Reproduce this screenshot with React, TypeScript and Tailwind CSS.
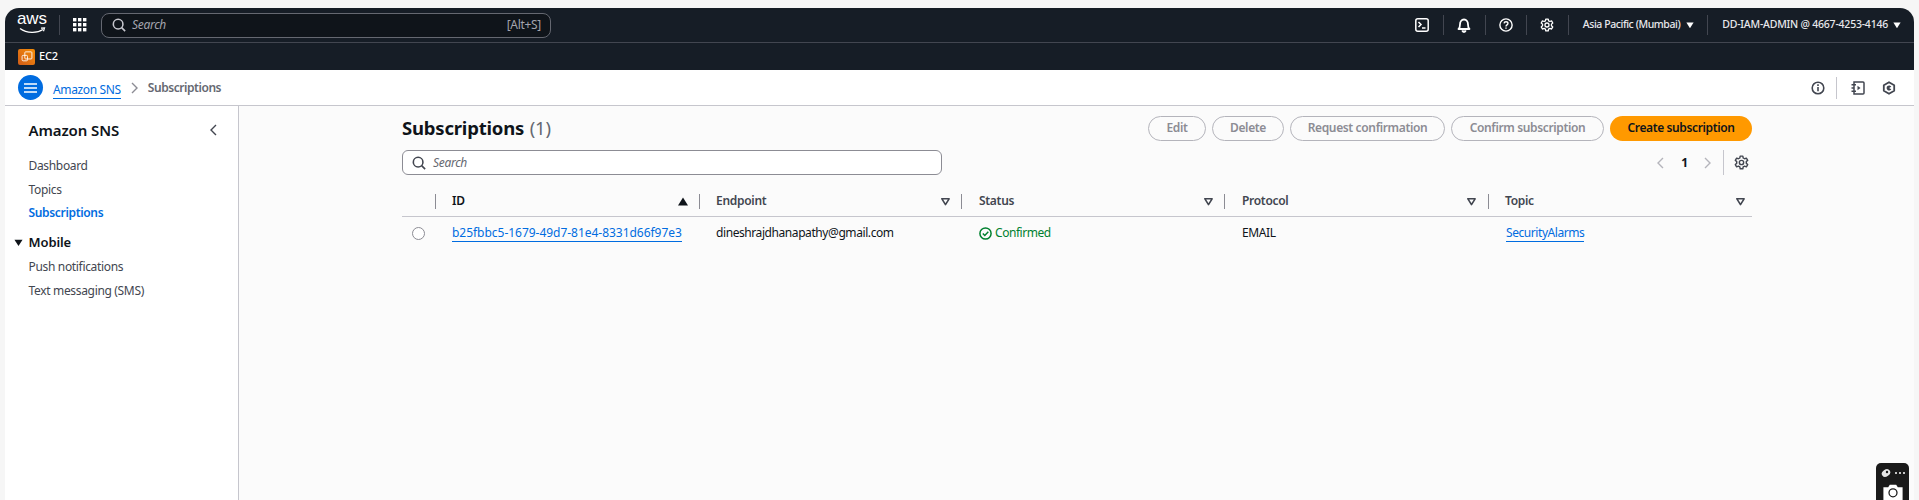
import React from "react";

const Sep = ({ c = "bg-[#424650]", h = "h-[20px]" }: { c?: string; h?: string }) => <div className={`w-px ${h} ${c} shrink-0`} />;

const SearchIcon = ({ c = "#c6c6cd" }: { c?: string }) => (
  <svg width="14" height="14" viewBox="0 0 16 16" fill="none" stroke={c} strokeWidth="1.8"><circle cx="7" cy="7" r="5.5" /><path d="M11 11l4 4" /></svg>
);

const Gear = ({ c = "#fff", s = 15 }: { c?: string; s?: number }) => (
  <svg width={s} height={s} viewBox="0 0 16 16" fill="none" stroke={c} strokeWidth="1.5" strokeLinejoin="round">
    <path d="M6.6 1.2h2.8l.4 2 1.5.8 1.9-.7 1.4 2.4-1.5 1.3v1.9l1.5 1.3-1.4 2.4-1.9-.7-1.5.8-.4 2H6.6l-.4-2-1.5-.8-1.9.7-1.4-2.4 1.5-1.3V7L1.4 5.7l1.4-2.4 1.9.7 1.5-.8z" />
    <circle cx="8" cy="8" r="2.3" />
  </svg>
);

const Caret = ({ c = "#fff", s = 8 }: { c?: string; s?: number }) => (
  <svg width={s} height={s} viewBox="0 0 10 10" fill={c}><path d="M0.5 2h9L5 9z" /></svg>
);

const SortDown = () => (
  <svg width="9" height="9" viewBox="0 0 10 10" fill="none" stroke="#424650" strokeWidth="1.8" strokeLinejoin="round"><path d="M1 2h8L5 8.5z" /></svg>
);

const Chevron = ({ dir, c, s = 12 }: { dir: "l" | "r"; c: string; s?: number }) => (
  <svg width={s} height={s} viewBox="0 0 12 12" fill="none" stroke={c} strokeWidth="1.4"><path d={dir === "l" ? "M8 1L3 6l5 5" : "M4 1l5 5-5 5"} /></svg>
);

const Head = ({ label, sort, mr = "mr-[11px]", ml = "ml-[16px]" }: { label: string; sort?: boolean; mr?: string; ml?: string }) => (
  <div className="flex items-center h-[30px]">
    <Sep c="bg-[#8c8c94]" h="h-[15px]" />
    <span className={`${ml} text-[12px] font-semibold tracking-[-0.3px] ${sort ? "text-[#0f141a]" : "text-[#424650]"}`}>{label}</span>
    <span className={`ml-auto ${mr} flex`}>
      {sort ? <svg width="10" height="9" viewBox="0 0 10 9" fill="#0f141a"><path d="M5 .5L10 8.5H0z" /></svg> : <SortDown />}
    </span>
  </div>
);

const Pill = ({ children, w }: { children: React.ReactNode; w: string }) => (
  <div className={`${w} h-[25px] rounded-full border border-[#b4b4bb] flex items-center justify-center text-[12px] font-semibold tracking-[-0.36px] text-[#8c8c94] pb-[1px]`}>{children}</div>
);

const Link = ({ children, t = "" }: { children: React.ReactNode; t?: string }) => (
  <a className={`text-[12px] leading-[16px] text-[#006ce0] border-b border-[#006ce0] ${t}`}>{children}</a>
);

export default function App() {
  return (
    <div className="relative h-[500px] w-[1919px] overflow-hidden bg-[#f6f6f6] pt-2 pl-[5px] pr-[5px]" style={{ fontFamily: '"Noto Sans", sans-serif' }}>
      <div className="h-[492px] rounded-t-[14px] overflow-hidden bg-[#fbfbfb] flex flex-col">
        {/* Top nav */}
        <div className="h-[35px] shrink-0 bg-[#161d26] border-b border-[#424650] flex items-center text-white">
          <div className="ml-[11px] w-[32px] h-[26px] flex flex-col items-center leading-none relative">
            <span className="text-[17px] leading-[16px] -mt-[1px]" style={{ fontFamily: '"Liberation Sans", sans-serif' }}>aws</span>
            <svg width="27" height="8" viewBox="0 0 27 8" fill="none" className="absolute top-[15px] left-[3px]">
              <path d="M1 1.5C8 6.5 18 6.5 24 2.5" stroke="#fff" strokeWidth="1.4" />
              <path d="M22 1.2l3.5-.2-1 3.2" stroke="#fff" strokeWidth="1.2" />
            </svg>
          </div>
          <div className="ml-[11px]"><Sep /></div>
          <svg className="ml-[13px]" width="14" height="14" viewBox="0 0 14 14" fill="#fff">
            {[0, 5, 10].flatMap((y) => [0, 5, 10].map((x) => <rect key={`${x}-${y}`} x={x} y={y} width="3.4" height="3.4" />))}
          </svg>
          <div className="ml-[14px] w-[450px] h-[25px] rounded-[8px] border border-[#656871] bg-[#0f141a] flex items-center pl-[10px] pr-[9px]">
            <SearchIcon />
            <span className="ml-[6px] text-[12px] italic tracking-[-0.3px] text-[#a4a4ad]">Search</span>
            <span className="ml-auto text-[12px] tracking-[-0.3px] text-[#a4a4ad]">[Alt+S]</span>
          </div>
          <div className="ml-auto flex items-center h-full">
            <svg width="14" height="14" viewBox="0 0 14 14" fill="none" stroke="#fff" strokeWidth="1.5"><rect x=".8" y=".8" width="12.4" height="12.4" rx="2" /><path d="M3.5 4l2.5 2.5L3.5 9M7 10h3.5" /></svg>
            <div className="ml-[14px]"><Sep /></div>
            <svg className="ml-[13px]" width="14" height="15" viewBox="0 0 14 15" fill="none" stroke="#fff" strokeWidth="1.8" strokeLinejoin="round"><path d="M1.500 11c1.300-1 1.500-2 1.500-4.500S4.500 1.500 7 1.500 11 4 11 6.500s.2 3.500 1.500 4.500z" /><path d="M5.200 12.500c.3 1 1 1.500 1.800 1.500s1.500-.5 1.800-1.500" fill="#fff" /></svg>
            <div className="ml-[14px]"><Sep /></div>
            <svg className="ml-[13px]" width="14" height="14" viewBox="0 0 16 16" fill="none" stroke="#fff" strokeWidth="1.6"><circle cx="8" cy="8" r="7" /><path d="M5.8 6.200C5.900 5 6.800 4.300 8 4.300s2.200.8 2.200 1.900c0 1.700-2.200 1.700-2.200 3.500M8 10.800v1.400" /></svg>
            <div className="ml-[13px]"><Sep /></div>
            <div className="ml-[13px] flex"><Gear s={14} /></div>
            <div className="ml-[14px]"><Sep /></div>
            <span className="ml-[14px] text-[10.500px] font-medium tracking-[-0.43px] text-[#e8e8ec]">Asia Pacific (Mumbai)</span>
            <span className="ml-[6px] flex"><Caret /></span>
            <div className="ml-[13px]"><Sep /></div>
            <span className="ml-[14px] text-[10.500px] font-medium tracking-[-0.22px] text-[#e8e8ec]">DD-IAM-ADMIN @ 4667-4253-4146</span>
            <span className="ml-[5px] mr-[13px] flex"><Caret /></span>
          </div>
        </div>
        {/* Services bar */}
        <div className="h-[27px] shrink-0 bg-[#161d26] flex items-center">
          <div className="ml-[13px] w-[17px] h-[16px] rounded-[2px] bg-gradient-to-tr from-[#d05c17] to-[#f78e04] flex items-center justify-center">
            <svg width="12" height="12" viewBox="0 0 11 11" fill="none" stroke="#fff" strokeWidth=".8"><rect x="3.500" y=".8" width="6.500" height="6.500" rx=".8" /><rect x="1" y="4" width="5" height="5" rx="1" /></svg>
          </div>
          <span className="ml-[4px] text-[11px] font-medium tracking-[-0.2px] text-white">EC2</span>
        </div>
        {/* Breadcrumb */}
        <div className="h-[36px] shrink-0 bg-white border-b border-[#c6c6cd] flex items-center">
          <div className="ml-[13px] w-[25px] h-[25px] rounded-full bg-[#006ce0] flex items-center justify-center">
            <svg width="13" height="12" viewBox="0 0 13 12" stroke="#fff" strokeWidth="1.600"><path d="M0 2h13M0 6h13M0 10h13" /></svg>
          </div>
          <div className="ml-[10px]"><Link t="tracking-[-0.35px]">Amazon SNS</Link></div>
          <span className="ml-[7px] flex"><Chevron dir="r" c="#8c8c94" /></span>
          <span className="ml-[8px] text-[12px] font-semibold tracking-[-0.45px] text-[#656871]">Subscriptions</span>
          <div className="ml-auto flex items-center">
            <svg width="14" height="14" viewBox="0 0 14 14" fill="none" stroke="#424650" strokeWidth="1.600"><circle cx="7" cy="7" r="5.800" /><path d="M7 6v4.200M7 3.300v1.600" /></svg>
            <div className="ml-[11px]"><Sep c="bg-[#c6c6cd]" h="h-[22px]" /></div>
            <svg className="ml-[14px]" width="14" height="14" viewBox="0 0 14 14" fill="none" stroke="#424650" strokeWidth="1.500"><path d="M3 1h9a1 1 0 0 1 1 1v10a1 1 0 0 1-1 1H3z" /><path d="M0.500 3.800h4.500M0.500 7h2.500M0.500 10.200h4.500" /><path d="M6.500 4.800L9.500 7l-3 2.200z" fill="#424650" stroke="none" /></svg>
            <svg className="ml-[17px] mr-[18px]" width="14" height="14" viewBox="0 0 14 14" fill="none" stroke="#424650" strokeWidth="1.800" strokeLinejoin="round"><path d="M7 1.200l5.200 3v5.600L7 12.800l-5.200-3V4.200z" /><path d="M9.300 5.800A2.500 2.500 0 1 0 9.300 8.200L7 7z" fill="#424650" stroke="none" /></svg>
          </div>
        </div>
        {/* Body */}
        <div className="flex flex-1 min-h-0">
          <aside className="w-[234px] shrink-0 bg-white border-r border-[#c6c6cd] pl-[23.500px] text-[12px] tracking-[-0.33px] text-[#424650]">
            <div className="relative h-[15px] mt-[17px] flex items-center text-[15px] font-semibold tracking-[-0.1px] text-[#0f141a]">
              Amazon SNS
              <span className="absolute left-[179px] top-[1px] flex"><Chevron dir="l" c="#424650" /></span>
            </div>
            <div className="mt-[16.500px] flex flex-col">
              <div className="h-[23.500px] flex items-center">Dashboard</div>
              <div className="h-[23.500px] flex items-center">Topics</div>
              <div className="h-[23.500px] flex items-center font-semibold text-[#006ce0]">Subscriptions</div>
            </div>
            <div className="relative h-[24px] mt-[5.500px] flex items-center text-[13px] font-semibold tracking-[-0.1px] text-[#0f141a]">
              <span className="absolute -left-[15px] top-[7px] flex"><Caret c="#0f141a" s={9} /></span>
              Mobile
            </div>
            <div className="flex flex-col">
              <div className="h-[24px] flex items-center">Push notifications</div>
              <div className="h-[24px] flex items-center">Text messaging (SMS)</div>
            </div>
          </aside>
          <main className="ml-[163px] w-[1350px] shrink-0">
            <div className="h-[25px] mt-[10px] flex items-center">
              <h1 className="-mt-[2px] text-[18.500px] font-bold tracking-[-0.2px] text-[#0f141a]">Subscriptions <span className="font-normal text-[#656871] ml-[1px]">(1)</span></h1>
              <div className="ml-auto flex gap-[6px]">
                <Pill w="w-[58px]">Edit</Pill>
                <Pill w="w-[72px]">Delete</Pill>
                <Pill w="w-[155px]">Request confirmation</Pill>
                <Pill w="w-[153px]">Confirm subscription</Pill>
                <div className="w-[142px] h-[25px] rounded-full bg-[#ff9900] flex items-center justify-center text-[12px] font-semibold tracking-[-0.38px] text-[#0f141a] pb-[1px]">Create subscription</div>
              </div>
            </div>
            <div className="h-[25px] mt-[9px] flex items-center">
              <div className="w-[540px] h-[25px] rounded-[6px] border border-[#8c8c94] bg-white flex items-center pl-[9px]">
                <SearchIcon c="#424650" />
                <span className="ml-[7px] text-[12px] italic tracking-[-0.3px] text-[#656871]">Search</span>
              </div>
              <div className="ml-auto flex items-center">
                <Chevron dir="l" c="#b4b4bb" />
                <span className="ml-[14px] text-[12px] font-bold text-[#0f141a]">1</span>
                <span className="ml-[13px] flex"><Chevron dir="r" c="#b4b4bb" /></span>
                <div className="ml-[10px]"><Sep c="bg-[#c6c6cd]" h="h-[25px]" /></div>
                <div className="ml-[10px] mr-[3px] flex"><Gear c="#424650" s={15} /></div>
              </div>
            </div>
            <div className="mt-[11px] grid grid-cols-[33px_264px_262px_263px_264px_264px] border-b border-[#c6c6cd]">
              <div />
              <Head label="ID" sort />
              <Head label="Endpoint" />
              <Head label="Status" ml="ml-[17px]" />
              <Head label="Protocol" mr="mr-[12px]" ml="ml-[17px]" />
              <Head label="Topic" mr="mr-[7px]" />
            </div>
            <div className="h-[32px] grid grid-cols-[33px_264px_262px_263px_264px_264px] items-center text-[12px] text-[#0f141a]">
              <div className="ml-[10px] w-[13px] h-[13px] rounded-full border border-[#8c8c94] bg-white" />
              <div className="pl-[17px]"><Link t="tracking-[-0.03px]">b25fbbc5-1679-49d7-81e4-8331d66f97e3</Link></div>
              <div className="pl-[17px] tracking-[-0.42px]">dineshrajdhanapathy@gmail.com</div>
              <div className="pl-[18px] flex items-center text-[#00802f] tracking-[-0.45px]">
                <svg width="13" height="13" viewBox="0 0 13 13" fill="none" stroke="#00802f" strokeWidth="1.500"><circle cx="6.500" cy="6.500" r="5.600" /><path d="M3.800 6.500l2 2 3.500-3.700" /></svg>
                <span className="ml-[3px]">Confirmed</span>
              </div>
              <div className="pl-[18px] tracking-[-0.4px]">EMAIL</div>
              <div className="pl-[18px]"><Link t="tracking-[-0.43px]">SecurityAlarms</Link></div>
            </div>
          </main>
        </div>
      </div>
      {/* Floating capture widget */}
      <div className="absolute left-[1876px] top-[463px] w-[33px] h-[37px] rounded-t-[5px] bg-[#1a1a1a] flex flex-col items-center overflow-hidden">
        <div className="mt-[5px] flex items-center gap-[4px]">
          <svg width="10" height="10" viewBox="0 0 10 10" fill="#e5e5e5"><ellipse cx="5" cy="5" rx="4.500" ry="3.500" transform="rotate(-35 5 5)" /><circle cx="6" cy="4" r="1.200" fill="#1a1a1a" /></svg>
          <div className="flex gap-[2px]">
            <div className="w-[2px] h-[2px] bg-white rounded-full" /><div className="w-[2px] h-[2px] bg-white rounded-full" /><div className="w-[2px] h-[2px] bg-white rounded-full" />
          </div>
        </div>
        <svg className="mt-[6px]" width="24" height="20" viewBox="0 0 24 20" fill="#fff"><path d="M0 4h6l2-3h8l2 3h6v16H0z" /><circle cx="12" cy="11" r="5" fill="none" stroke="#1a1a1a" strokeWidth="1.600" /></svg>
      </div>
    </div>
  );
}
